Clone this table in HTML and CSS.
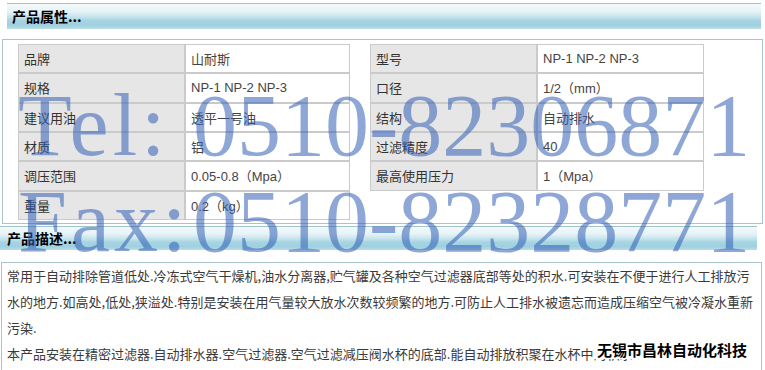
FILE: index.html
```html
<!DOCTYPE html>
<html lang="zh-CN">
<head>
<meta charset="utf-8">
<title>产品属性</title>
<link rel="stylesheet" href="styles.css">
</head>
<body>
<div class="page">
  <h2 class="bar bar-attr">产品属性...</h2>
  <div class="panel">
    <table class="spec spec-l">
      <tr><td class="k">品牌</td><td class="v">山耐斯</td></tr>
      <tr><td class="k">规格</td><td class="v">NP-1 NP-2 NP-3</td></tr>
      <tr><td class="k">建议用油</td><td class="v">透平一号油</td></tr>
      <tr><td class="k">材质</td><td class="v">铝</td></tr>
      <tr><td class="k">调压范围</td><td class="v">0.05-0.8（Mpa）</td></tr>
      <tr><td class="k">重量</td><td class="v">0.2（kg）</td></tr>
    </table>
    <table class="spec spec-r">
      <tr><td class="k">型号</td><td class="v">NP-1 NP-2 NP-3</td></tr>
      <tr><td class="k">口径</td><td class="v">1/2（mm）</td></tr>
      <tr><td class="k">结构</td><td class="v">自动排水</td></tr>
      <tr><td class="k">过滤精度</td><td class="v">40</td></tr>
      <tr><td class="k">最高使用压力</td><td class="v">1（Mpa）</td></tr>
    </table>
  </div>
  <h2 class="bar bar-desc">产品描述...</h2>
  <div class="desc">
    <p>常用于自动排除管道低处.冷冻式空气干燥机,油水分离器,贮气罐及各种空气过滤器底部等处的积水.可安装在不便于进行人工排放污<br>水的地方.如高处,低处,狭溢处.特别是安装在用气量较大放水次数较频繁的地方.可防止人工排水被遗忘而造成压缩空气被冷凝水重新<br>污染.</p>
    <p>本产品安装在精密过滤器.自动排水器.空气过滤器.空气过滤减压阀水杯的底部.能自动排放积聚在水杯中的积水...</p>
  </div>
  <div class="wm" aria-hidden="true">
    <div><span class="wm-k">Tel:</span>0510-82306871</div>
    <div><span class="wm-k">Fax:</span>0510-82328771</div>
  </div>
  <div class="stamp">无锡市昌林自动化科技</div>
</div>
</body>
</html>
```

FILE: styles.css
```css
* { box-sizing: border-box; }

html, body {
  margin: 0;
  height: 370px;
  overflow: hidden;
}

body {
  font-family: "Liberation Sans", "Noto Sans CJK SC", sans-serif;
  font-size: 13px;
  color: #444;
  background: #fff;
}

.page {
  position: relative;
  height: 370px;
}

.bar {
  margin: 0;
  font-family: "Noto Sans CJK SC", sans-serif;
  font-weight: 700;
  font-size: 14px;
  color: #000;
  border-top: 1px solid #9fc4cc;
  background: linear-gradient(to bottom,
    #f3f9fb 0%,
    #e6f3f7 30%,
    #c4e3ec 52%,
    #a6d4e3 66%,
    #a0d0e0 85%,
    #badde8 100%);
}

.bar-attr {
  margin: 3px 4px 0 7px;
  height: 26px;
  line-height: 25px;
  padding-left: 5px;
}

.panel {
  margin: 10px 2px 0 2px;
  border: 1px solid #a9c5cc;
  padding: 4px 0 3px 15px;
  display: flex;
  align-items: flex-start;
  gap: 20px;
}

.spec {
  border-spacing: 0;
  table-layout: fixed;
}

.spec-l { width: 332px; }
.spec-r { width: 334px; }

.spec td {
  border: 1px solid #cacaca;
  height: 29.33px;
  padding: 0 5px;
  white-space: nowrap;
  color: #444;
}

.spec .k {
  background: #e6e6e6;
  width: 167px;
  color: #333;
}

.spec .v { background: #fff; }

.bar-desc {
  margin: 2px 8px 0 0;
  height: 24px;
  line-height: 23px;
  padding-left: 7px;
}

.desc {
  margin: 12px 3px 0 1px;
  border: 1px solid #a9c5cc;
  padding: 0 4px 10px 5px;
  font-family: "Noto Sans CJK SC", sans-serif;
  font-size: 13px;
  line-height: 26px;
  color: #3a3a3a;
}

.desc p { margin: 0; }

.wm {
  position: absolute;
  left: 18px;
  top: 75px;
  font-family: "Liberation Serif", serif;
  font-size: 88px;
  line-height: 96px;
  color: rgba(50, 95, 180, 0.55);
  white-space: nowrap;
  pointer-events: none;
}

.wm-k {
  display: inline-block;
  width: 175px;
  letter-spacing: 4px;
}

.stamp {
  position: absolute;
  left: 594px;
  top: 338px;
  padding: 0 3px;
  background: #fff;
  font-family: "Noto Sans CJK SC", sans-serif;
  font-weight: 700;
  font-size: 15px;
  line-height: 18px;
  color: #000;
}
```
